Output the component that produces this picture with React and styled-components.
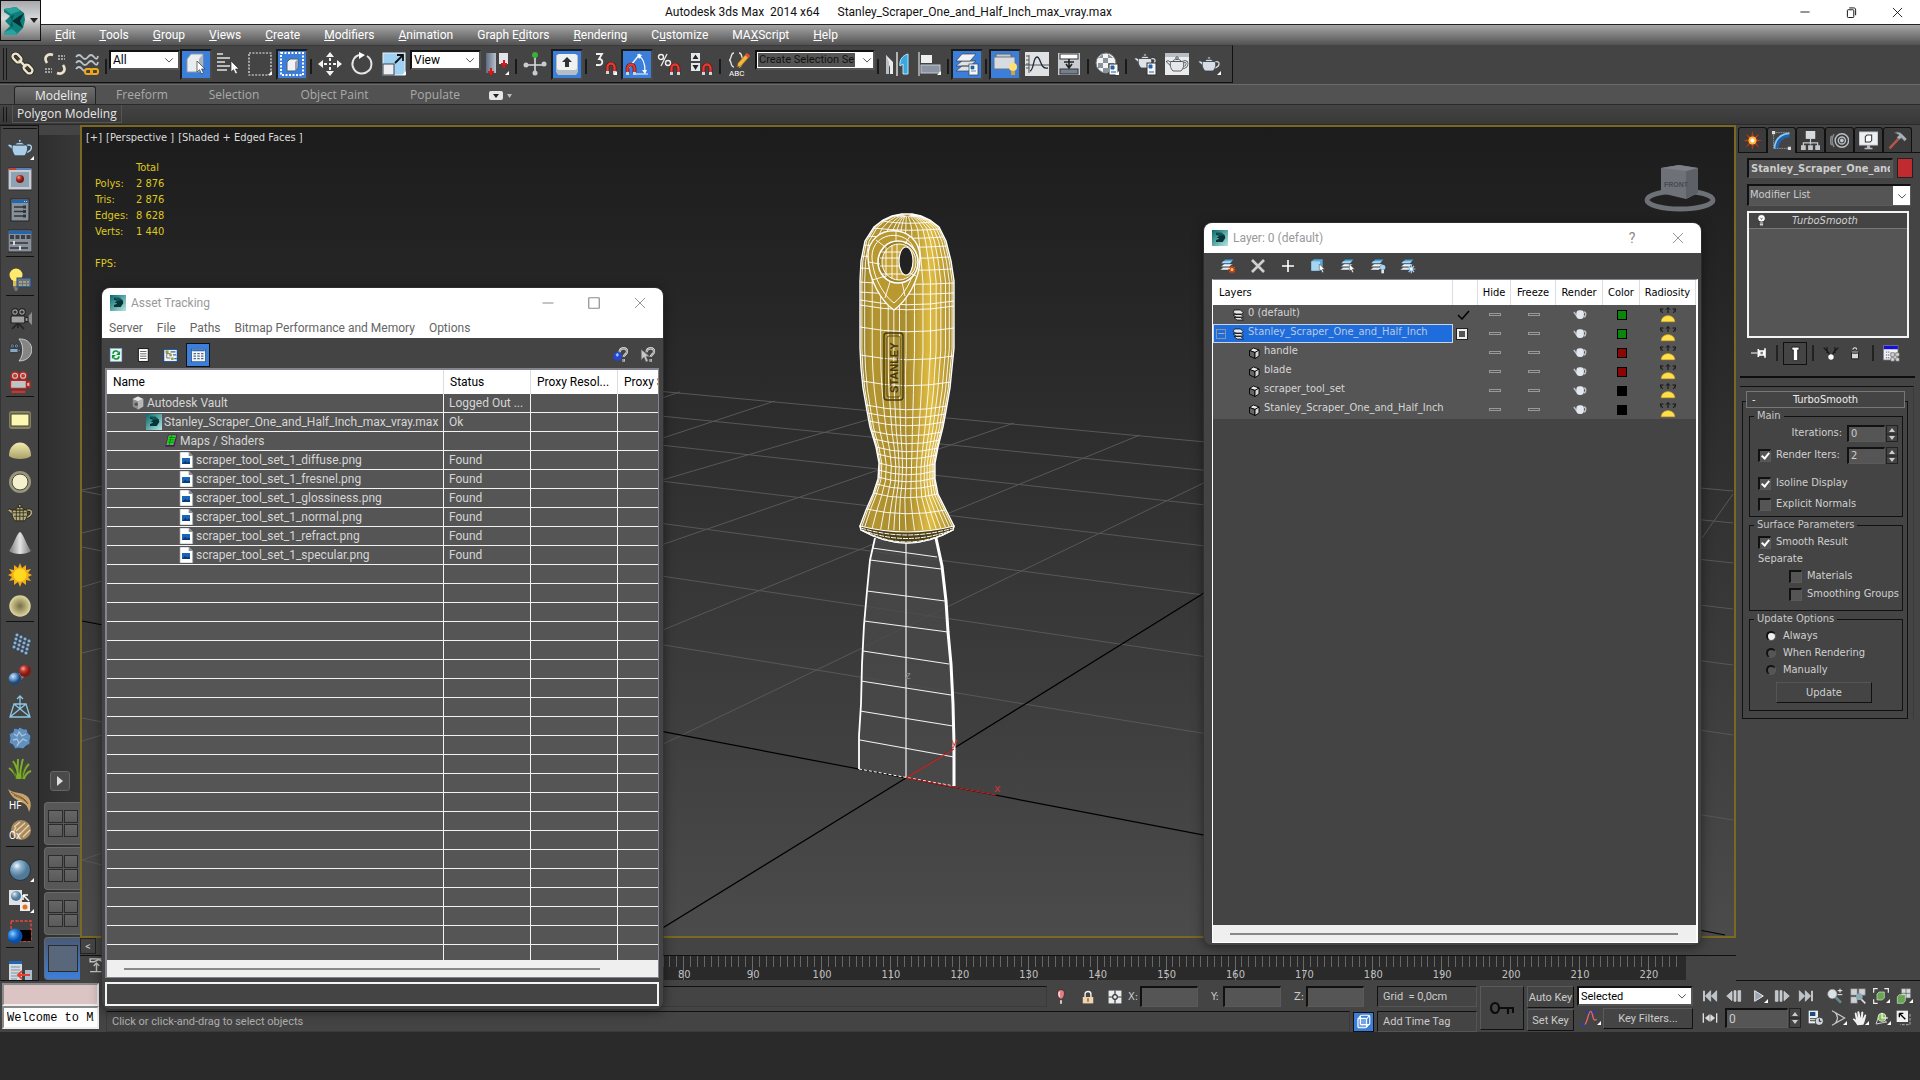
import React from 'react';
import styled, { createGlobalStyle, css } from 'styled-components';

const ui = 'Roboto, "Open Sans", sans-serif';
const openSans = '"Open Sans", "Noto Sans", sans-serif';
const tahoma = '"DejaVu Sans Condensed", "DejaVu Sans", sans-serif';

/* ---------- icons ---------- */

const teapot = (fill, line = '#3a4048') => (
  <g stroke={line} strokeWidth=".8">
    <path d="M18 10c6-2 5 5-.5 6" fill="none" stroke={line} strokeWidth="2.6" />
    <path d="M18 10c6-2 5 5-.5 6" fill="none" stroke={fill} strokeWidth="1.3" />
    <path d="M7 15L1 9.500l2-.8L8 11z" fill={fill} />
    <path d="M6 9.500c-1.500 3-.5 7 2 9.500h8c2.500-2.500 3.500-6.500 2-9.500z" fill={fill} />
    <path d="M8 9.500c0-3 8-3 8 0z" fill={fill} />
    <circle cx="12" cy="6" r="1.300" fill={fill} />
  </g>
);

const magnet = (x, y) => (
  <g transform={`translate(${x} ${y})`}>
    <path d="M1.500 10V5a3.500 3.500 0 0 1 7 0v5" fill="none" stroke="#5c0f0f" strokeWidth="3.600" />
    <path d="M1.500 10V5a3.500 3.500 0 0 1 7 0v5" fill="none" stroke="#e03a33" strokeWidth="2.400" />
    <path d="M0 9h3v3H0zM7 9h3v3H7z" fill="#cfd3da" />
  </g>
);

const cursor = (x, y) => (
  <path transform={`translate(${x} ${y})`} d="M0 0v11l2.500-2.300L4.500 13l2-1-2-4H8z" fill="#fff" stroke="#333" strokeWidth=".7" />
);

const sheets = (
  <g stroke="#2e3740" strokeWidth=".6">
    <path d="M0 18l5-4h13l-5 4z" fill="#e3ebf2" />
    <path d="M1 13l5-4h13l-5 4z" fill="#f2f6fa" />
    <path d="M2 8l6-6h13l-6 6z" fill="#4ba6e2" />
    <path d="M2 8l3-3h13l-3 3z" fill="#a9d7f4" stroke="none" />
  </g>
);

const reel = (fill, line) => (
  <g fill={fill} stroke={line} strokeWidth="1.200">
    <circle cx="7" cy="5" r="3.300" />
    <circle cx="14" cy="5" r="3.300" />
    <rect x="3" y="9" width="14" height="7" rx="1" />
    <path d="M17 11l3-1v5l-3-1z" />
    <circle cx="7" cy="5" r="1" />
    <circle cx="14" cy="5" r="1" />
  </g>
);

const panelBox = (
  <g>
    <rect x="3" y="1" width="18" height="22" fill="#8a9097" stroke="#20242a" />
    <rect x="4" y="2" width="16" height="3" fill="#1f67b5" />
    <path d="M16 3.500h3" stroke="#f4c0b0" strokeDasharray="1 1" />
  </g>
);

const logo = (
  <g>
    <rect width="24" height="24" fill="url(#tealFade)" />
    <path d="M6 4h8l5 4 1 4-4 6H6v-3l5-2-4-2 4-2-5-2z" fill="#063437" />
    <path d="M6 4h8l4 4-7 1z" fill="#0d5659" />
  </g>
);

const icons = {
  logo,
  link: (
    <g>
      <g fill="none" stroke="#222" strokeWidth="4">
        <rect x="-5" y="-3" width="10" height="6" rx="3" transform="translate(6 6) rotate(45)" />
        <rect x="-5" y="-3" width="10" height="6" rx="3" transform="translate(17 17) rotate(45)" />
      </g>
      <g fill="none" stroke="#efe6c9" strokeWidth="2.400">
        <rect x="-5" y="-3" width="10" height="6" rx="3" transform="translate(6 6) rotate(45)" />
        <rect x="-5" y="-3" width="10" height="6" rx="3" transform="translate(17 17) rotate(45)" />
        <path d="M8 8l7 7" />
      </g>
    </g>
  ),
  unlink: (
    <g fill="none" stroke="#ece4c8" strokeWidth="2.600">
      <path d="M4 11C0 5 5 1 10 3" />
      <path d="M20 13c4 6-1 10-6 8" />
      <path d="M15 4h7M15 7h7M2 17h7M2 20h7" stroke="#a2a2a2" strokeWidth="2" strokeDasharray="2 1" />
    </g>
  ),
  bind: (
    <g fill="none">
      <path d="M1 5q3-4 6 0t6 0 6 0 4-1M1 11q3-4 6 0t6 0 6 0 4-1M1 17q3-4 6 0t4 0" stroke="#b9c3cb" strokeWidth="1.800" />
      <rect x="10" y="17" width="7" height="5" rx="2" stroke="#f0a818" strokeWidth="2" />
      <rect x="16" y="17" width="7" height="5" rx="2" stroke="#f0a818" strokeWidth="2" />
    </g>
  ),
  selectObject: (
    <g>
      <path d="M3 7l4-5h12v13l-4 5H3z" fill="#e9edf0" stroke="#8b98a5" />
      <path d="M15 7l4-5v13l-4 5z" fill="#aab4be" />
      {cursor(13, 9)}
    </g>
  ),
  selectName: (
    <g>
      <path d="M1 2h6M1 6h13M1 10h8M1 14h13M1 18h10" stroke="#e2e2e2" strokeWidth="1.500" />
      {cursor(15, 9)}
    </g>
  ),
  region: <rect x="1" y="1" width="22" height="22" fill="none" stroke="#eee" strokeWidth="1.200" strokeDasharray="2 1.400" />,
  crossing: (
    <g>
      <rect x="1" y="1" width="22" height="22" fill="none" stroke="#fff" strokeWidth="2" strokeDasharray="2 1.500" />
      <path d="M7 10l3-3h8v8l-3 4H7z" fill="#f0f2f4" stroke="#53606e" />
      <path d="M15 10l3-3v8l-3 4z" fill="#9aa5b1" />
    </g>
  ),
  move: (
    <g fill="#f2f2f2">
      <path d="M12 0l4 5H8zM12 24l4-5H8zM0 12l5-4v8zM24 12l-5-4v8z" />
      <path d="M11 6h2v3h-2zM11 15h2v3h-2zM6 11h3v2H6zM15 11h3v2h-3zM11 11h2v2h-2z" />
    </g>
  ),
  rotate: (
    <g fill="none" stroke="#e4e6e8" strokeWidth="2">
      <path d="M17 4a9.500 9.500 0 1 1-8-1" />
      <path d="M9 0l6 3-6 4z" fill="#fff" stroke="none" />
    </g>
  ),
  scale: (
    <g>
      <rect x="1" y="1" width="22" height="22" fill="#9fd2f2" stroke="#e6f4fd" />
      <rect x="1" y="12" width="11" height="11" fill="#eceff2" stroke="#3d454f" />
      <path d="M13 11l7-7M15 3h6v6" stroke="#111" strokeWidth="1.800" fill="none" />
    </g>
  ),
  pivot: (
    <g>
      <path d="M1 1h10v20H1z" fill="url(#steel)" />
      <path d="M14 1h9v11h-9z" fill="#e3e5e8" />
      <path d="M6 16v7M3 20h6M19 8v8M16 12h6" stroke="#e01515" strokeWidth="2" />
    </g>
  ),
  manipulate: (
    <g>
      <path d="M12 3v18M3 13h18" stroke="#d8dadc" strokeWidth="1.600" />
      <circle cx="12" cy="3" r="3" fill="#3fae34" />
      <circle cx="3" cy="13" r="2.500" fill="#c7ccd1" />
      <circle cx="21" cy="12" r="2.500" fill="#c7ccd1" />
      <circle cx="12" cy="21" r="2.500" fill="#c7ccd1" />
    </g>
  ),
  keyboard: (
    <g>
      <path d="M1 3h22v17l-2 3H3l-2-3z" fill="#b7bdc4" />
      <rect x="2" y="2" width="20" height="16" rx="2" fill="#eef0f2" />
      <path d="M12 5l5 5h-3v5h-4v-5H7z" fill="#2d3136" />
    </g>
  ),
  snap: (
    <g>
      <path d="M3 2h6l-3 5c5 0 4 7-.5 6H3" fill="none" stroke="#f0f0f0" strokeWidth="1.800" />
      {magnet(13, 10)}
    </g>
  ),
  angle: (
    <g>
      <path d="M2 18L15 2M10 22h13M14 4c5 3 6 8 6 15" fill="none" stroke="#fff" strokeWidth="1.200" />
      <path d="M12 2l5 1-3 4zM17 18h5l-2 4z" fill="#fff" />
      {magnet(1, 11)}
    </g>
  ),
  percent: (
    <g>
      <circle cx="4" cy="5" r="2.500" fill="none" stroke="#eee" strokeWidth="1.400" />
      <circle cx="11" cy="11" r="2.500" fill="none" stroke="#eee" strokeWidth="1.400" />
      <path d="M10 2L4 14" stroke="#eee" strokeWidth="1.300" />
      {magnet(13, 11)}
    </g>
  ),
  spinner: (
    <g>
      <path d="M2 1h9v8H2zM2 11h9v8H2z" fill="#e4e7ea" />
      <path d="M6.500 2.500L9.500 7h-6zM6.500 18l3-5h-6z" fill="#222" />
      {magnet(13, 11)}
    </g>
  ),
  abc: (
    <g>
      <path d="M7 1C3 1 5 8 2 8c3 0 1 7 5 7M12 1c4 0 2 7 5 7-3 0-1 7-5 7" fill="none" stroke="#e8e8e8" strokeWidth="1.300" />
      <path d="M20 1l3 3-9 10-4 1 1-4z" fill="#f4b73a" stroke="#8d5a10" strokeWidth=".7" />
      <path d="M20 1l3 3-2 2-3-3z" fill="#e24b37" />
      <text x="2" y="24" fontSize="8" fontFamily="Roboto" fill="#fff">ABC</text>
    </g>
  ),
  mirror: (
    <g>
      <path d="M1 3l7 7v12l-3 0V13l-4 9z" fill="#e9ebed" />
      <path d="M1 3v19h3V10z" fill="#b9bfc5" />
      <path d="M12 0v24" stroke="#fff" strokeWidth="1.200" />
      <path d="M23 2v20h-5V12l-3 2c-1-6 3-11 8-12z" fill="#39a8e0" stroke="#bfe3f5" />
    </g>
  ),
  align: (
    <g>
      <path d="M2 0v24" stroke="#d8dbde" strokeWidth="1.200" />
      <rect x="4" y="3" width="11" height="8" fill="#eceef0" />
      <rect x="4" y="13" width="19" height="8" fill="#8b95a3" stroke="#c3c9d0" />
    </g>
  ),
  layers: (
    <g stroke="#3a434d" strokeWidth=".7">
      <path d="M1 19l6-5h14l-6 5zM1 14l6-5h14l-6 5z" fill="#dfe3e7" />
      <path d="M1 9l6-7h14l-6 7z" fill="#f2f4f5" />
      <rect x="14" y="12" width="9" height="11" fill="#f4f6f8" />
      <path d="M16 14h3v3h-3zM16 19h5" fill="#2560a8" stroke="#2560a8" />
    </g>
  ),
  ribbon: (
    <g>
      <path d="M3 5V2h15v3" fill="#c5cad0" stroke="#5b6570" />
      <rect x="1" y="5" width="21" height="12" fill="#d8dce0" stroke="#697480" />
      <circle cx="20" cy="15" r="4" fill="#ffe074" />
      <path d="M18 19h4v4h-4z" fill="#d8a038" />
    </g>
  ),
  curve: (
    <g>
      <rect x="0" y="0" width="24" height="24" fill="#dfe1e3" />
      <path d="M4 3v18M1 4h3M1 8h3M1 12h3M1 16h3M0 13h24" stroke="#555" fill="none" />
      <path d="M5 19c4-1 3-14 7-14s3 13 11 11" stroke="#1d2a3a" fill="none" strokeWidth="1.300" />
    </g>
  ),
  schematic: (
    <g>
      <path d="M1 1h22v22H1z" fill="#c9cdd2" />
      <rect x="3" y="2" width="18" height="5" fill="#fff" stroke="#333" />
      <rect x="3" y="17" width="18" height="5" fill="#76808c" stroke="#333" />
      <path d="M12 7v9M9 12l3 4 3-4M7 10h10" fill="none" stroke="#222" strokeWidth="1.600" />
    </g>
  ),
  material: (
    <g>
      <circle cx="11" cy="11" r="10" fill="#f3f3f3" stroke="#777" />
      <path d="M3 6h5V2zM8 6h5v5H8zM13 2v4h5zM3 11h5v5H3zM13 11h6v5h-6zM8 16h5v5H8z" fill="#8a929c" />
      <rect x="14" y="12" width="9" height="11" fill="#f4f6f8" stroke="#333" />
      <path d="M16 14h3v3h-3zM16 20h5" fill="#2560a8" stroke="#2560a8" />
    </g>
  ),
  renderSetup: (
    <g>
      <g transform="translate(0 -3)">{teapot('#dfe3e7')}</g>
      <rect x="14" y="11" width="9" height="12" fill="#f4f6f8" stroke="#333" />
      <path d="M16 13h3v3h-3zM16 20h5" fill="#2560a8" stroke="#2560a8" />
    </g>
  ),
  renderFrame: (
    <g>
      <rect x="0" y="1" width="24" height="22" fill="#e9ebec" />
      <rect x="0" y="1" width="24" height="4" fill="#b9bec4" />
      {teapot('#e5e7ea')}
    </g>
  ),
  render: teapot('#d6dde4'),
  tpBlue: <g transform="translate(-2 -2) scale(1.150)">{teapot('#a9cfe8')}</g>,
  tpWire: (
    <g transform="translate(-2 -2) scale(1.150)">
      {teapot('#b5ac80', '#262416')}
      <path d="M6 12h12M7 15h11M9 8v11M12 7v12M15 8v11" stroke="#3a3722" strokeWidth=".8" />
    </g>
  ),
  frameBall: (
    <g>
      <rect x="0" y="1" width="24" height="22" fill="#c7ccd2" stroke="#2b2f34" />
      <path d="M1 2h7" stroke="#cc3f38" strokeWidth="2" />
      <path d="M8 2h15" stroke="#5b80b4" strokeWidth="2" />
      <rect x="3" y="5" width="18" height="15" fill="#8ea2b3" />
      <circle cx="12" cy="12" r="4" fill="url(#redBall)" />
    </g>
  ),
  listPanel: (
    <g>
      {panelBox}
      <path d="M6 9h11M6 13.500h11M6 18h11" stroke="#30353b" strokeWidth="1.300" />
      <path d="M15 7.500h3v3h-3zM15 12h3v3h-3zM15 16.500h3v3h-3z" fill="#30353b" />
    </g>
  ),
  sliderPanel: (
    <g>
      <rect x="0" y="1" width="24" height="22" fill="#8a9097" stroke="#20242a" />
      <rect x="1" y="2" width="22" height="3" fill="#1f67b5" />
      <path d="M2 6h4v4H2zM7.500 6h4v4h-4zM13 6h4v4h-4zM18.500 6h4v4h-4z" fill="#3a3f45" />
      <path d="M2 14h18M2 19h18" stroke="#30353b" strokeWidth="1.500" />
      <path d="M6 12v4M12 17v4" stroke="#fff" strokeWidth="1.500" />
    </g>
  ),
  bulbPanel: (
    <g>
      <circle cx="8" cy="7" r="6.500" fill="#ffe96c" />
      <path d="M5 13h6v5H5z" fill="#d8c055" />
      <path d="M5 18h6l-2 5H7z" fill="#777" />
      <rect x="9" y="10" width="14" height="9" fill="#6c747d" stroke="#1d4a84" />
      <path d="M11 14h10M11 17h10" stroke="#d6c78d" strokeDasharray="3 1" />
    </g>
  ),
  camera: (
    <g>
      <path d="M18 12l6-7v13z" fill="#8d8d8d" />
      <path d="M10 16l-6 6M10 16l6 6M10 16v5" stroke="#222" strokeWidth="1.600" />
      {reel('#a2a2a2', '#242424')}
    </g>
  ),
  cameraDome: (
    <g>
      <path d="M11 1c17-1 17 22 0 22 5-6 5-16 0-22z" fill="#858585" stroke="#c9c9c9" />
      <g transform="translate(0 5) scale(.6)">{reel('#8aa7c2', '#1c232b')}</g>
    </g>
  ),
  cameraRed: (
    <g transform="translate(-1 1) scale(1.150)">{reel('#b9c7c7', '#c4231c')}<path d="M4 19h12" stroke="#d5302a" strokeWidth="2" /></g>
  ),
  rectLight: <g><rect x="1" y="3" width="22" height="18" rx="3" fill="#858264" /><rect x="3" y="6" width="18" height="12" fill="#fdf8b1" stroke="#403e2a" /></g>,
  dome: <path d="M1 17C1-1 23-1 23 17c-4 4-18 4-22 0z" fill="url(#cream)" />,
  disc: <g><circle cx="12" cy="12" r="11" fill="#98967c" /><circle cx="12" cy="12" r="8" fill="#f5f1cf" stroke="#4a4838" /></g>,
  cone: <path d="M12 0c-3 1-5 10-11 19 5 4 17 4 22 0C17 10 15 1 12 0z" fill="url(#coneFade)" />,
  sun: (
    <g>
      <path d="M12 0l2 5 4-3 0 5 5-1-3 4 4 2-4 2 3 4-5-1 0 5-4-3-2 5-2-5-4 3 0-5-5 1 3-4-4-2 4-2-3-4 5 1 0-5 4 3z" fill="#f2ad1d" />
      <circle cx="12" cy="12" r="6.500" fill="#ffd91f" />
    </g>
  ),
  ambient: <circle cx="12" cy="12" r="10" fill="url(#ambientFade)" stroke="#d8cf98" strokeWidth="1.500" />,
  particles: (
    <g fill="#8fb0cf" stroke="#26384a" strokeWidth=".7">
      {[0, 1, 2, 3].map((r) => [0, 1, 2, 3].map((c) => (
        <circle key={`${r}${c}`} cx={9 + c * 4 - r * 2 + r} cy={2 + r * 4 + c * 2} r="2" />
      )))}
    </g>
  ),
  metaball: (
    <g>
      <path d="M7 11c4 0 6-4 7-7l7 7c-4 0-8 4-9 8z" fill="#8b7f96" />
      <circle cx="17" cy="7" r="6" fill="url(#redBall)" />
      <circle cx="7" cy="15" r="6.500" fill="url(#blueBall)" />
    </g>
  ),
  cage: (
    <g fill="none" stroke="#8cc6e4" strokeWidth="1.300">
      <path d="M2 22L6 9h12l4 13zM6 9l16 13M18 9L2 22M12 14V2M9 4l3-3 3 3" />
    </g>
  ),
  roughBall: (
    <g>
      <path d="M12 1l3 2 4 0 1 4 3 3-1 4 0 4-4 2-3 3-4-1-4 1-2-4-4-2 1-5-1-4 4-2 1-4 4 1z" fill="#6590bb" stroke="#2c4b69" />
      <path d="M6 8l3 2 2-4 3 4 4-2M5 14l4-1 2 4 4-4 4 2M9 20l2-4" stroke="#a3c4e2" fill="none" strokeWidth="1.300" />
    </g>
  ),
  grass: (
    <g fill="none" stroke="#7fae2c" strokeWidth="2">
      <path d="M11 22C10 14 8 8 5 4M12 22c0-8 1-14 3-20M14 22c1-7 4-12 7-15M9 22C7 16 4 13 1 11M16 22c1-4 4-7 7-8M10 22C9 12 10 7 10 2" />
      <path d="M8 22C6 14 4 9 3 7M14 22c0-6 2-11 4-16" stroke="#3c6512" strokeWidth="1" />
    </g>
  ),
  hair: (
    <g>
      <path d="M0 1c5 5 14 2 20 8 4 5 3 11 1 15-1-5-3-8-6-9C8 12 3 9 0 1z" fill="#c9a36c" />
      <path d="M3 4c6 5 12 3 17 12M6 7c5 3 9 3 13 8" stroke="#7a5a30" fill="none" />
      <text x="1" y="21" fontSize="10" fontFamily="Roboto" fill="#fff">HF</text>
    </g>
  ),
  ox: (
    <g>
      <circle cx="13" cy="11" r="10" fill="#a88a62" />
      <path d="M6 8l6-5M8 12l9-8M12 15l9-9M15 18l7-7M5 14l3-6" stroke="#ead2a5" strokeWidth="1.300" />
      <text x="1" y="20" fontSize="10" fontFamily="Roboto" fill="#fff">Ox</text>
    </g>
  ),
  ball: <circle cx="12" cy="12" r="10.500" fill="url(#skyBall)" stroke="#243440" />,
  convert: (
    <g>
      <rect x="1" y="1" width="13" height="15" fill="#dfe3e6" />
      <circle cx="8" cy="7" r="5" fill="url(#skyBall)" />
      <path d="M15 6h5M15 6v5M15 6l6 6" stroke="#fff" strokeWidth="1.500" />
      <rect x="12" y="13" width="10" height="9" fill="#eee" />
      <circle cx="17" cy="18" r="2.500" fill="#e2721f" />
    </g>
  ),
  proxy: (
    <g>
      <rect x="3" y="1" width="20" height="20" fill="none" stroke="#f0453c" strokeWidth="1.400" strokeDasharray="3 1.500" />
      <rect x="12" y="10" width="11" height="11" fill="#000" />
      <circle cx="7" cy="16" r="7.500" fill="url(#brightBall)" />
    </g>
  ),
  docArrow: (
    <g>
      <rect x="1" y="2" width="13" height="22" fill="#d6dade" />
      <rect x="1" y="2" width="13" height="3" fill="#1f67b5" />
      <path d="M3 8h9M3 11h9M3 14h9M3 17h9M3 20h6" stroke="#7893ad" />
      <rect x="17" y="11" width="7" height="11" fill="#a9bdcf" />
      <path d="M22 16H11M14 12l-4 4 4 4" stroke="#e5402e" strokeWidth="1.800" fill="none" />
    </g>
  ),
  refresh: (
    <g>
      <rect x="2" y="1" width="20" height="22" fill="#e8f4ff" stroke="#8fb6dd" />
      <path d="M7 10c0-6 8-6 9-2M17 14c0 6-8 6-9 2" fill="none" stroke="#12962a" strokeWidth="2.800" />
      <path d="M19 5v7h-7zM5 19v-7h7z" fill="#12962a" />
    </g>
  ),
  doc: <g><rect x="4" y="1" width="17" height="22" fill="#fff" stroke="#111" strokeWidth="1.600" /><path d="M7 6h11M7 10h11M7 14h11M7 18h11" stroke="#555" strokeWidth="1.500" /></g>,
  tree: (
    <g>
      <rect x="1" y="2" width="22" height="20" fill="#eef3f8" stroke="#1d4a84" strokeWidth="2" />
      <path d="M6 4v12h6M6 9h6" stroke="#333" fill="none" />
      <path d="M4 4h5v4H4zM10 9h4v4h-4zM13 15h4v4h-4z" fill="#a39a30" />
      <path d="M12 6h8M16 11h5M18 17h4" stroke="#3b6ea8" strokeWidth="2" />
    </g>
  ),
  grid: (
    <g>
      <rect x="1" y="2" width="22" height="20" fill="#f4f6f8" stroke="#1d3f70" />
      <path d="M2 4h20" stroke="#2b68ad" strokeWidth="2" />
      <path d="M4 9h4M10 9h4M16 9h4M4 13h4M10 13h4M16 13h4M4 17h4M10 17h4M16 17h4" stroke="#4f6c92" strokeWidth="2" />
    </g>
  ),
  helpGlobe: (
    <g>
      <circle cx="7" cy="14" r="6.500" fill="#2546cf" />
      <path d="M4 11l3-2 2 3-3 3z" fill="#8fc3ff" />
      <path d="M10 8c0-8 12-8 11-1 0 4-5 4-5 8M16 18v4" fill="none" stroke="#e6e6e6" strokeWidth="3.400" />
      <path d="M10 8c0-8 12-8 11-1 0 4-5 4-5 8M16 18v4" fill="none" stroke="#555" strokeWidth="1" />
    </g>
  ),
  helpCursor: (
    <g>
      <path d="M2 4v15l4-4 3 7 3-1-3-7h5z" fill="#c8c8c8" stroke="#777" />
      <path d="M10 8c0-8 12-8 11-1 0 4-5 4-5 8M16 18v4" fill="none" stroke="#e6e6e6" strokeWidth="3.400" />
      <path d="M10 8c0-8 12-8 11-1 0 4-5 4-5 8M16 18v4" fill="none" stroke="#555" strokeWidth="1" />
    </g>
  ),
  vault: <g><path d="M12 1l9 4v13l-9 5-9-5V5z" fill="#8f8f8f" /><path d="M12 1l9 4-9 4-9-4z" fill="#e3e3e3" /><path d="M12 9l9-4v13l-9 5z" fill="#b8b8b8" /><circle cx="9" cy="14" r="3" fill="#555" /></g>,
  maps: <g><path d="M7 1h16l-5 21H2z" fill="#5a1460" /><path d="M8 2h13l-5 17H4z" fill="#25d425" /><path d="M9 6h10M8 10h10M7 14h10M13 2l-4 17" stroke="#0c7d12" strokeWidth="1.500" /></g>,
  png: <g><path d="M3 0h13l6 6v18H3z" fill="#fff" stroke="#a0a4a8" /><path d="M16 0v6h6z" fill="#8b9096" /><rect x="6" y="9" width="12" height="9" fill="#1865b8" /><path d="M6 18l5-5 3 3 2-2 2 2v2z" fill="#0b3a6e" /></g>,
  newLayer: <g>{sheets}<path d="M18 12v11M12 17.500h11M14 13.500l8 8M22 13.500l-8 8" stroke="#e2481c" strokeWidth="2" /><circle cx="18" cy="17.500" r="2" fill="#ffd24a" /></g>,
  remove: <path d="M3 3l18 18M21 3L3 21" stroke="#cfcfcf" strokeWidth="4" />,
  plus: <path d="M12 3v18M3 12h18" stroke="#fff" strokeWidth="2.400" />,
  selCube: <g><path d="M2 5l4-3h13v13l-4 4H2z" fill="#58a9de" /><path d="M2 5h13v14H2z" fill="#a7d6f2" />{cursor(14, 9)}</g>,
  selLayer: <g>{sheets}{cursor(14, 9)}</g>,
  litLayer: <g>{sheets}<circle cx="19" cy="14" r="4" fill="#a9d4f3" /><path d="M17 18h4v5h-4z" fill="#d7e6f2" /></g>,
  frozenLayer: <g>{sheets}<path d="M17 10v13M11 16.500h12M13 12l8 9M21 12l-8 9" stroke="#9fd0f6" strokeWidth="1.800" /><circle cx="17" cy="16.500" r="2" fill="#fff" /></g>,
  stack: (
    <g stroke="#000" strokeWidth="1.400" fill="#e6e6e6">
      <path d="M4 17h13l6 5H10z" /><path d="M2 12l4-1h12l5 5H9z" /><path d="M2 7l3-5h12l6 6-4 2H8z" />
    </g>
  ),
  cube: <g stroke="#000" strokeWidth="1.800"><path d="M3 7l8-5 11 4-8 5z" fill="#e9e9e9" /><path d="M3 7l11 4v12L3 18z" fill="#666" /><path d="M14 11l8-5v12l-8 5z" fill="#d5d5d5" /></g>,
  star: (
    <g>
      <path d="M12 0l2 8 7-5-5 7 8 2-8 2 5 7-7-5-2 8-2-8-7 5 5-7-8-2 8-2-5-7 7 5z" fill="#b23a16" />
      <circle cx="12" cy="12" r="5" fill="#ffb93c" /><circle cx="12" cy="12" r="2.500" fill="#fff" />
    </g>
  ),
  modify: (
    <g fill="none">
      <path d="M5 22C6 12 12 6 22 5" stroke="#1e63ac" strokeWidth="6" />
      <path d="M3 22C4 10 10 4 22 3" stroke="#8bc9f1" strokeWidth="2" />
      <path d="M2 2v20h20M2 2h20" stroke="#bbb" strokeWidth=".8" strokeDasharray="2 1" />
      <path d="M0 0h4v4H0zM20 20h4v4h-4z" fill="#ddd" />
    </g>
  ),
  hierarchy: <g><path d="M6 0h12v10H6z" fill="#d7dadd" /><path d="M12 10v7M3 19v-4h18v4" stroke="#ccc" fill="none" strokeWidth="1.500" /><path d="M0 18h6v6H0zM9 18h6v6H9zM18 18h6v6h-6z" fill="#c3c7cb" /></g>,
  motion: <g fill="none" stroke="#b9bfc6" strokeWidth="1.800"><circle cx="15" cy="12" r="8.500" /><circle cx="15" cy="12" r="4.500" /><circle cx="15" cy="12" r="1.500" fill="#fff" /><path d="M5 4c-3 5-3 11 0 16M2 6c-2 4-2 8 0 12" stroke="#858a90" /></g>,
  display: <g><rect x="0" y="1" width="24" height="17" fill="#edf0f2" stroke="#8d949b" /><path d="M8 7l2-2h6v7l-2 2H8z" fill="#fff" stroke="#333" strokeWidth="1.300" /><path d="M10 18h4v3h3v2H7v-2h3z" fill="#bbb" /></g>,
  hammer: <g><path d="M2 22L14 9" stroke="#b8564a" strokeWidth="3" /><path d="M8 2c5-2 8 0 11 3l5 5-3 3-4-4-3 2-3-3 3-3z" fill="#aab0b7" stroke="#555" /></g>,
  lightbulb: <g><circle cx="12" cy="8" r="7" fill="#fff" stroke="#000" /><path d="M8 15h8v8H8z" fill="#fff" stroke="#000" /><path d="M8 18h8M8 21h8M10 7l2 3 2-3" stroke="#000" fill="none" /></g>,
  pin: <g><path d="M0 12h10" stroke="#fff" strokeWidth="1.500" /><path d="M11 6v12M13 9h6v6h-6zM21 5v14" stroke="#fff" strokeWidth="2.400" fill="#777" /></g>,
  endResult: <path d="M7 3h10v4h-2v15H9V7H7z" fill="#fff" stroke="#111" />,
  unique: <g><path d="M1 4l7 7 3 6M23 4l-7 7-3 6M6 3v9M18 3v9" stroke="#111" strokeWidth="1.600" fill="none" /><circle cx="12" cy="18" r="4" fill="#fff" /></g>,
  trash: <g><path d="M6 11h12v11H6z" fill="#d6d6d6" stroke="#111" strokeWidth="1.500" /><ellipse cx="12" cy="10" rx="7" ry="3" fill="#777" stroke="#111" /><path d="M8 6c2-4 6-4 7 0" stroke="#eee" fill="none" strokeWidth="2" /></g>,
  config: <g><rect x="1" y="1" width="20" height="20" fill="#f4f4f4" stroke="#999" /><rect x="1" y="1" width="20" height="5" fill="#1212d0" /><path d="M4 10h6M4 14h6M4 18h6" stroke="#88a" strokeWidth="2" strokeDasharray="2 1" /><path d="M11 11h5v5h-5zM18 11h5v5h-5zM11 18h5v5h-5zM18 18h5v5h-5z" fill="#ddd" stroke="#555" /></g>,
  pinRed: <g><path d="M12 1c7 0 6 9 2 14h-4C6 10 5 1 12 1z" fill="#dd8086" stroke="#3a1518" /><path d="M10 4c-2 3-1 6 0 8" stroke="#ffe0e0" fill="none" strokeWidth="2" /><path d="M10 16h4v7h-4z" fill="#ddd" stroke="#222" /></g>,
  lock: <g><path d="M7 12V7c0-6 10-6 10 0v5" fill="none" stroke="#f2f2f2" strokeWidth="2.400" /><path d="M3 12h18v11H3z" fill="#f3d4ac" /><path d="M12 14v6" stroke="#553" strokeWidth="2" /></g>,
  offsetMode: <g><rect x="1" y="1" width="22" height="22" fill="#e9edf0" /><path d="M12 1v7M12 16v7M1 12h7M16 12h7" stroke="#333" strokeWidth="2" /><circle cx="12" cy="12" r="4" fill="none" stroke="#333" strokeWidth="2" /></g>,
  isolate: (
    <g fill="none" stroke="#fff" strokeWidth="1.800">
      <rect x="7" y="2" width="15" height="15" rx="2" />
      <rect x="3" y="7" width="14" height="15" rx="2" fill="#fff" fillOpacity=".3" />
      <path d="M3 8l4-5M17 8l4-5M17 21l4-5" />
    </g>
  ),
  key: <g stroke="#0c0c0c" fill="none" strokeWidth="2.200"><ellipse cx="5" cy="12" rx="4" ry="5" /><path d="M9 12h15M18 12v6M23 12v5" /></g>,
  sCurve: <g><path d="M2 22C8 24 9 2 13 2s2 18 9 12" stroke="#e2666a" strokeWidth="2" fill="none" /><path d="M0 20h4v4H0zM6 1h4v4H6zM16 1h4v4h-4z" fill="#2a38b5" /></g>,
  first: <g fill="#bcc3ca" stroke="#ddd"><path d="M3 4v16" strokeWidth="2.500" /><path d="M13 4v16L5 12zM22 4v16l-8-8z" /></g>,
  prev: <g fill="#bcc3ca" stroke="#ddd"><path d="M9 5v14L1 12z" /><path d="M12 4h3v16h-3zM18 4h4v16h-4z" /></g>,
  play: <path d="M7 4l13 8-13 8z" fill="#9aa8b5" stroke="#e6e6e6" strokeWidth="1.500" />,
  next: <g fill="#bcc3ca" stroke="#ddd"><path d="M15 5v14l8-7z" /><path d="M9 4h3v16H9zM2 4h4v16H2z" /></g>,
  last: <g fill="#bcc3ca" stroke="#ddd"><path d="M21 4v16" strokeWidth="2.500" /><path d="M11 4v16l8-8zM2 4v16l8-8z" /></g>,
  keyMode: <g fill="#ddd" stroke="#ddd"><path d="M2 5v14M22 5v14" strokeWidth="2" /><path d="M11 7v10L5 12zM13 7v10l6-5z" /></g>,
  zoom: <g><circle cx="8" cy="9" r="7" fill="#dbe2e5" stroke="#888" /><path d="M13 14l8 8" stroke="#6a8a92" strokeWidth="4" /><path d="M16 4h7M19.500 1v6M16 10h7" stroke="#fff" strokeWidth="1.400" /></g>,
  zoomAll: <g><path d="M1 1h10v10H1zM13 1h10v10H13zM1 13h10v10H1z" fill="#ccd1d5" stroke="#666" /><circle cx="14" cy="13" r="5" fill="#8faab5" /><path d="M17 17l6 6" stroke="#ddd" strokeWidth="2.500" /></g>,
  extents: <g><path d="M1 7V1h6M17 1h6v6M1 17v6h6" stroke="#eee" fill="none" strokeWidth="1.800" /><path d="M6 9l3-3h8v9l-3 3H6z" fill="#6aa457" stroke="#d3e8c7" /></g>,
  extentsAll: <g><path d="M8 1h14v14H8z" fill="#d6dade" stroke="#666" /><path d="M15 1v14M8 8h14" stroke="#555" /><path d="M2 13l3-3h9v9l-3 4H2z" fill="#6aa457" stroke="#d3e8c7" /></g>,
  timeConfig: <g><rect x="1" y="1" width="14" height="19" fill="#e9eef2" /><rect x="3" y="3" width="8" height="6" fill="#1a4a80" /><path d="M3 13h9M3 16h9" stroke="#666" strokeWidth="2" /><circle cx="17" cy="17" r="6" fill="#cfd6da" stroke="#222" /><path d="M17 13v4h3" stroke="#222" fill="none" strokeWidth="1.500" /></g>,
  fov: <path d="M3 1l19 11L3 23M8 4c4 5 4 11 0 16" fill="none" stroke="#c9c9c9" strokeWidth="1.800" />,
  hand: <path d="M8 23c-3-5-5-7-7-9 1-2 3-1 5 1L4 5c1-2 3-1 3 1l2 6-1-9c1-2 3-1 3 0l2 9 1-9c2-2 3 0 3 1l-1 9 3-6c2-1 3 0 2 2-1 5-2 9-4 13z" fill="#f0f0f0" />,
  orbit: <g><path d="M3 21l4-11 12 8z" fill="none" stroke="#ccc" strokeWidth="1.500" /><circle cx="12" cy="11" r="6" fill="#8fc05f" stroke="#fff" /><path d="M12 4v8h9" stroke="#fff" strokeWidth="1.600" fill="none" /></g>,
  maxVp: <g><path d="M1 1h17v17H1z" fill="#f2f2f2" /><path d="M5 5h6M5 5v6M5 5l9 9" stroke="#000" strokeWidth="2" fill="none" /><path d="M21 6v16H6" stroke="#aaa" strokeWidth="1.500" strokeDasharray="4 2" fill="none" /></g>,
  curveMini: <path d="M3 4h18v4l-6-3-6 3H3zM12 22V11M8 14l4-4 4 4M3 22h18" fill="none" stroke="#c4c4c4" strokeWidth="2" />,
  radio: (
    <g>
      <path d="M2 22c0-12 20-12 20 0z" fill="#ffdf4b" stroke="#e0b020" />
      <path d="M12 9V1M9 4l3-3 3 3M4 9L1 4M0 8V3h5M20 9l3-5M24 8V3h-5" stroke="#111" fill="none" strokeWidth="1.500" />
    </g>
  ),
  close: <path d="M2 2l20 20M22 2L2 22" stroke="currentColor" strokeWidth="1.800" />,
  minimize: <path d="M1 12h22" stroke="currentColor" strokeWidth="2" />,
  maximize: <rect x="3" y="3" width="18" height="18" rx="1" fill="none" stroke="currentColor" strokeWidth="2" />,
  restore: <path d="M3 8c0-2 1-2 2-2h10c2 0 2 1 2 2v13c0 2-1 2-2 2H5c-2 0-2-1-2-2zM7 2h9c4 0 5 1 5 5v11" fill="none" stroke="currentColor" strokeWidth="2" />,
  chevron: <path d="M3 8l9 9 9-9" fill="none" stroke="#555" strokeWidth="2.400" />,
};

const Icon = ({ name, size = 24 }) => (
  <svg width={size} height={size} viewBox="0 0 24 24" aria-hidden="true">{icons[name]}</svg>
);

/* ---------- data ---------- */

const menus = [
  ['', 'E', 'dit'], ['', 'T', 'ools'], ['', 'G', 'roup'], ['', 'V', 'iews'], ['', 'C', 'reate'],
  ['', 'M', 'odifiers'], ['', 'A', 'nimation'], ['Graph E', 'd', 'itors'], ['', 'R', 'endering'],
  ['C', 'u', 'stomize'], ['MA', 'X', 'Script'], ['', 'H', 'elp'],
];

const tools = [
  'link', 'unlink', 'bind', '|', { select: 'All', width: 71 },
  { icon: 'selectObject', on: true }, 'selectName', { icon: 'region', more: true }, { icon: 'crossing', on: true }, '|',
  'move', 'rotate', { icon: 'scale', more: true }, { select: 'View', width: 71 }, { icon: 'pivot', more: true }, '|',
  'manipulate', { icon: 'keyboard', on: true }, '|',
  { icon: 'snap', more: true }, { icon: 'angle', on: true }, 'percent', 'spinner', '|',
  'abc', { select: 'Create Selection Se', width: 120, dim: true }, '|',
  'mirror', { icon: 'align', more: true }, '|', { icon: 'layers', on: true }, '|',
  { icon: 'ribbon', on: true }, 'curve', 'schematic', '|', { icon: 'material', more: true }, '|',
  'renderSetup', 'renderFrame', { icon: 'render', more: true },
];

const sideTools = [
  'tpBlue+', 'frameBall', 'listPanel', 'sliderPanel', '|', 'bulbPanel', '|', 'camera', 'cameraDome', 'cameraRed', '|',
  'rectLight', 'dome', 'disc', 'tpWire', 'cone', 'sun', 'ambient', '|',
  'particles', 'metaball', 'cage', 'roughBall', 'grass', 'hair', 'ox', '|', 'ball+', 'convert+', 'proxy', '|', 'docArrow',
];

const assets = [
  { icon: 'vault', indent: 24, size: 14, name: 'Autodesk Vault', status: 'Logged Out ...' },
  { icon: 'logo', indent: 39, size: 16, name: 'Stanley_Scraper_One_and_Half_Inch_max_vray.max', status: 'Ok' },
  { icon: 'maps', indent: 57, size: 14, name: 'Maps / Shaders', status: '' },
  ...['diffuse', 'fresnel', 'glossiness', 'normal', 'refract', 'specular'].map((map) => ({
    icon: 'png', indent: 71, size: 16, name: `scraper_tool_set_1_${map}.png`, status: 'Found',
  })),
];

const layers = [
  { icon: 'stack', name: '0 (default)', color: '#0a860a', mark: 'check' },
  { icon: 'stack', name: 'Stanley_Scraper_One_and_Half_Inch', color: '#0a860a', mark: 'box', selected: true },
  { icon: 'cube', name: 'handle', color: '#8b0505', child: true },
  { icon: 'cube', name: 'blade', color: '#8b0505', child: true },
  { icon: 'cube', name: 'scraper_tool_set', color: '#000', child: true },
  { icon: 'cube', name: 'Stanley_Scraper_One_and_Half_Inch', color: '#000', child: true },
];

/* ---------- 3d scene ---------- */

// y, left edge, right edge of the handle silhouette
const profile = [
  [214, 902, 912], [216, 892, 921], [220, 883, 930], [227, 874, 939], [241, 865, 946], [261, 861, 951],
  [281, 860, 954], [308, 860, 954], [348, 860, 954], [368, 861, 952], [388, 863, 950], [411, 867, 946],
  [427, 870, 943], [447, 876, 938], [463, 879, 935], [479, 878, 935], [494, 873, 938], [510, 866, 946], [526, 860, 954],
];
const meridians = [0.02, 0.05, 0.13, 0.22, 0.3, 0.36, 0.42, 0.49, 0.58, 0.67, 0.75, 0.81, 0.86, 0.91, 0.95, 0.98];
const rings = [221, 228, 236, 245, 256, 268, 282, 292, 300, 305, 327, 355, 381, 405, 413, 421, 431, 439, 447, 454, 463, 470, 477, 484, 493, 509];

const edgesAt = (y) => {
  const i = Math.max(1, profile.findIndex((p) => p[0] >= y));
  const [y0, l0, r0] = profile[i - 1];
  const [y1, l1, r1] = profile[i];
  const t = (y - y0) / (y1 - y0);
  return [l0 + (l1 - l0) * t, r0 + (r1 - r0) * t];
};

const dip = (y) => (y < 300 ? 4 : 9);
const outline = profile.map(([y, l]) => `${l} ${y}`).join('L')
  + 'L861 530Q907 556 953 530L'
  + profile.map(([y, , r]) => `${r} ${y}`).reverse().join('L');

const meridianPath = (t) => 'M' + profile.map(([y, l, r]) => (
  `${l + (r - l) * t} ${y + dip(y) * 2 * t * (1 - t)}`
)).join('L');

const ringPath = (y) => {
  const [l, r] = edgesAt(y);
  return `M${l} ${y}Q${(l + r) / 2} ${y + dip(y)} ${r} ${y + 1}`;
};

const bladeRows = [[548, 872, 937, 557], [560, 870, 941, 569], [591, 867, 945, 601], [621, 864, 948, 632],
  [651, 863, 949, 664], [681, 861, 951, 695], [711, 860, 953, 726], [740, 860, 954, 757]];

const gridLines = [
  [560, 382, 1733, 491], [560, 406, 1733, 523], [560, 434, 1733, 563], [560, 469, 1733, 609],
  [560, 510, 1733, 665], [560, 561, 1733, 735], [560, 628, 1733, 820],
  [560, 432, 680, 392], [560, 472, 775, 401], [560, 510, 894, 412], [560, 580, 1014, 423],
  [560, 672, 1140, 435], [560, 794, 1276, 448], [1702, 538, 1733, 494],
  [82, 490, 102, 486], [82, 491, 102, 495], [82, 533, 102, 528], [82, 547, 102, 551], [82, 587, 102, 581],
  [82, 653, 102, 648], [82, 718, 102, 722], [82, 741, 102, 735], [82, 860, 102, 853], [82, 860, 102, 865],
];

const Scene = () => (
  <SceneSvg viewBox="82 127 1652 809" preserveAspectRatio="xMidYMin slice">
    <defs>
      <linearGradient id="tealFade" x2="1" y2="1"><stop stopColor="#07686b" /><stop offset="1" stopColor="#b5e6e4" /></linearGradient>
      <linearGradient id="steel"><stop stopColor="#5d6c80" /><stop offset="1" stopColor="#b9c2cc" /></linearGradient>
      <linearGradient id="cream" y2="1" x2="0"><stop stopColor="#f3ecb0" /><stop offset="1" stopColor="#a8a067" /></linearGradient>
      <linearGradient id="coneFade"><stop stopColor="#777" /><stop offset=".5" stopColor="#e4e4e4" /><stop offset="1" stopColor="#777" /></linearGradient>
      <radialGradient id="ambientFade"><stop stopColor="#736e43" /><stop offset="1" stopColor="#d8cf98" /></radialGradient>
      <radialGradient id="redBall" cx=".35" cy=".3"><stop stopColor="#f6a89a" /><stop offset=".5" stopColor="#c23a2e" /><stop offset="1" stopColor="#7d1a14" /></radialGradient>
      <radialGradient id="blueBall" cx=".35" cy=".3"><stop stopColor="#d1e6fa" /><stop offset=".6" stopColor="#5b8fc6" /><stop offset="1" stopColor="#24486f" /></radialGradient>
      <radialGradient id="skyBall" cx=".35" cy=".3"><stop stopColor="#f4fafe" /><stop offset=".4" stopColor="#8fb4cf" /><stop offset="1" stopColor="#507a98" /></radialGradient>
      <radialGradient id="brightBall" cx=".35" cy=".35"><stop stopColor="#9ad0ff" /><stop offset=".5" stopColor="#2a84e2" /><stop offset="1" stopColor="#0a4da5" /></radialGradient>
      <linearGradient id="wood"><stop stopColor="#8f7824" /><stop offset=".12" stopColor="#b39530" /><stop offset=".5" stopColor="#a98c2c" /><stop offset=".75" stopColor="#e0bd43" /><stop offset="1" stopColor="#a88a2c" /></linearGradient>
    </defs>
    <g stroke="#585858" strokeWidth="1">
      {gridLines.map(([x1, y1, x2, y2]) => <line key={`${x1}-${y1}-${y2}`} x1={x1} y1={y1} x2={x2} y2={y2} />)}
    </g>
    <path d="M82 621L906 778L1725 935M648 937L906 778L1204 593" stroke="#000" fill="none" strokeWidth="1.200" />
    <path d="M875 538L870 560L867 591L864 625L862 664L861 704L859 736L859 769L954 786L954 744L953 704L951 664L948 632L946 601L942 566L937 538z" fill="#4a4a4a" fillOpacity=".8" />
    <path d="M875 538L870 560L867 591L864 625L862 664L861 704L859 736L859 769" fill="none" stroke="#fff" strokeWidth="1.800" />
    <path d="M936 538L942 566L946 601L948 632L951 664L953 704L954 744L954 786" fill="none" stroke="#fff" strokeWidth="3" />
    <path d="M859 769L954 786" stroke="#fff" strokeDasharray="3 2" />
    <g stroke="#f2f2f2" strokeWidth="1.200">
      {bladeRows.map(([y, l, r, y2]) => <line key={y} x1={l} y1={y} x2={r} y2={y2} />)}
      <line x1="906" y1="541" x2="906" y2="778" />
    </g>
    <path d={`M${outline}z`} fill="url(#wood)" stroke="#fff" strokeWidth="1.400" />
    <g fill="none" stroke="#fff" strokeWidth=".9">
      {meridians.map((t) => <path key={t} d={meridianPath(t)} />)}
      {rings.map((y) => <path key={y} d={ringPath(y)} />)}
    </g>
    <path d="M860 526Q907 538 954 526L953 530Q907 556 861 530z" fill="#4d3f14" stroke="#fff" strokeWidth="1.200" />
    <path d="M861 528Q907 542 953 528M862 530Q907 547 952 530M866 532Q907 552 948 532" fill="none" stroke="#fff" strokeDasharray="5 1" />
    <path d="M868 256C868 222 920 222 920 258C920 282 905 302 894 310C882 302 868 280 868 256z" fill="#b8982f" stroke="#fff" strokeWidth="1.400" />
    <path d="M872 256C873 228 916 228 916 259C914 280 903 296 894 303C884 296 872 276 872 256z" fill="none" stroke="#fff" />
    <ellipse cx="898" cy="262" rx="20" ry="21" fill="#9b7f26" stroke="#fff" strokeWidth="1.600" />
    <ellipse cx="899" cy="262" rx="17" ry="18" fill="#c4a236" stroke="#fff" />
    <path d="M880 252h22M880 258h22M880 266h22M882 274h22M886 247v30M892 245v34M897 244v36M868 262l12 2M872 280l14-4M885 298l5-16M905 296l-3-14M916 276l-8-4M876 240l8 6M896 231v10M910 236l-5 8" stroke="#fff" strokeWidth=".9" />
    <ellipse cx="906" cy="261" rx="7" ry="14" fill="#222" stroke="#fff" strokeWidth="1.200" />
    <g stroke="#463a12" fill="none">
      <rect x="884" y="333" width="19" height="67" rx="3" strokeWidth="1.400" />
      <rect x="887" y="336" width="13" height="61" rx="2" strokeWidth=".8" />
    </g>
    <text x="898" y="393" transform="rotate(-90 898 393)" fontSize="11" fontWeight="bold" fontFamily="Liberation Sans" fill="#463a12">STANLEY</text>
    <path d="M906 778L954 749M906 778L996 795" stroke="#d02020" strokeWidth="1.200" />
    <g fontSize="11" fontFamily="DejaVu Sans" fill="#d23434">
      <text x="951" y="746">y</text>
      <text x="994" y="792">x</text>
      <text x="905" y="679" fill="#888">z</text>
    </g>
  </SceneSvg>
);

const Cube = () => (
  <ViewCube viewBox="0 0 74 50" aria-label="View cube">
    <ellipse cx="37" cy="37" rx="33" ry="9" fill="none" stroke="#6d7076" strokeWidth="5" />
    <path d="M18 5l18-3 19 3v25l-12 6-25-6z" fill="#6e7177" />
    <path d="M43 8l12-3v25l-12 6z" fill="#5d6066" />
    <path d="M18 5l18-3 19 3-12 3z" fill="#7d8086" />
    <text x="21" y="24" fontSize="7" fontWeight="bold" fontFamily="Liberation Sans" fill="#484a50">FRONT</text>
  </ViewCube>
);

/* ---------- app ---------- */

const Dropdown = ({ label, options, width, dim, height }) => (
  <SelectBox $width={width} $height={height} $dim={dim}>
    <select aria-label={label} defaultValue={dim ? '' : options[0]}>
      {dim && <option value="" />}
      {options.map((o) => <option key={o}>{o}</option>)}
    </select>
    {dim && <Highlight>{options[0]}</Highlight>}
    <Icon name="chevron" size={10} />
  </SelectBox>
);

const Tool = ({ icon, on, more }) => (
  <ToolButton $on={on} $more={more} aria-label={icon}><Icon name={icon} /></ToolButton>
);

const AssetTracking = () => (
  <AssetWindow>
    <WindowTitle>
      <Icon name="logo" size={16} />
      <span>Asset Tracking</span>
      <WindowButtons>
        <button aria-label="Minimize"><Icon name="minimize" size={12} /></button>
        <button aria-label="Maximize"><Icon name="maximize" size={14} /></button>
        <button aria-label="Close"><Icon name="close" size={12} /></button>
      </WindowButtons>
    </WindowTitle>
    <WindowMenu>
      {['Server', 'File', 'Paths', 'Bitmap Performance and Memory', 'Options'].map((m) => <button key={m}>{m}</button>)}
    </WindowMenu>
    <AssetTools>
      <button aria-label="Refresh"><Icon name="refresh" size={14} /></button>
      <button aria-label="Status log"><Icon name="doc" size={14} /></button>
      <button aria-label="Tree view"><Icon name="tree" size={15} /></button>
      <button aria-label="Table view" className="on"><Icon name="grid" size={15} /></button>
      <span />
      <button aria-label="Help"><Icon name="helpGlobe" size={16} /></button>
      <button aria-label="Context help"><Icon name="helpCursor" size={16} /></button>
    </AssetTools>
    <AssetFrame>
      <AssetRows>
        <AssetTable>
          <colgroup><col width="337" /><col width="87" /><col width="87" /><col width="87" /></colgroup>
          <thead>
            <tr><th>Name</th><th>Status</th><th>Proxy Resol...</th><th>Proxy Status</th></tr>
          </thead>
          <tbody>
            {assets.map((a) => (
              <tr key={a.name}>
                <td><AssetName $indent={a.indent}><Icon name={a.icon} size={a.size} />{a.name}</AssetName></td>
                <td>{a.status}</td><td /><td />
              </tr>
            ))}
            {Array.from({ length: 24 }, (_, i) => <tr key={i}><td /><td /><td /><td /></tr>)}
          </tbody>
        </AssetTable>
      </AssetRows>
      <ScrollTrack $right={58}><i /></ScrollTrack>
    </AssetFrame>
    <PathInput aria-label="Path" />
  </AssetWindow>
);

const LayerManager = () => (
  <LayerWindow>
    <WindowTitle>
      <Icon name="logo" size={16} />
      <span>Layer: 0 (default)</span>
      <WindowButtons>
        <button aria-label="Help">?</button>
        <button aria-label="Close"><Icon name="close" size={12} /></button>
      </WindowButtons>
    </WindowTitle>
    <LayerTools>
      {['newLayer', 'remove', 'plus', 'selCube', 'selLayer', 'litLayer', 'frozenLayer'].map((n) => (
        <button key={n} aria-label={n}><Icon name={n} size={16} /></button>
      ))}
    </LayerTools>
    <LayerFrame>
      <LayerTable>
        <colgroup>
          <col /><col width="25" /><col width="33" /><col width="45" /><col width="47" /><col width="37" /><col width="56" />
        </colgroup>
        <thead>
          <tr><th>Layers</th><th /><th>Hide</th><th>Freeze</th><th>Render</th><th>Color</th><th>Radiosity</th></tr>
        </thead>
        <tbody>
          {layers.map((l, i) => (
            <tr key={i}>
              <td>
                <LayerName $child={l.child} $selected={l.selected}>
                  {!l.child && <Expander $show={l.selected}>−</Expander>}
                  <Icon name={l.icon} size={12} />
                  <span>{l.name}</span>
                </LayerName>
              </td>
              <LayerMark>
                {l.mark === 'check' && <svg width="13" height="10" viewBox="0 0 13 10"><path d="M1 5l4 4 7-8" fill="none" stroke="#000" strokeWidth="1.500" /></svg>}
                {l.mark === 'box' && <LayerBox />}
              </LayerMark>
              <td><Dash /></td>
              <td><Dash /></td>
              <td><svg width="15" height="15" viewBox="0 0 24 24"><path d="M3 8l5 7M19 8c4 0 4 7 0 8" stroke="#b9c0c9" strokeWidth="2.400" fill="none" /><rect x="7" y="5" width="12" height="14" rx="5" fill="#e3e8ee" /></svg></td>
              <td><Swatch $color={l.color} /></td>
              <td><Icon name="radio" size={16} /></td>
            </tr>
          ))}
        </tbody>
      </LayerTable>
      <LayerSpace />
      <ScrollTrack $right={18}><i /></ScrollTrack>
    </LayerFrame>
  </LayerWindow>
);

const Check = ({ label, checked, indent }) => (
  <CheckRow $indent={indent}>
    <input type="checkbox" defaultChecked={checked} />
    <span>{label}</span>
  </CheckRow>
);

const Spin = ({ id, label, value }) => (
  <SpinBox>
    <input id={id} aria-label={label} defaultValue={value} />
    <SpinArrows aria-label={`Step ${label}`}>
      <svg width="10" height="16" viewBox="0 0 10 16"><path d="M5 2l3 4H2zM5 14l3-4H2z" fill="#ccc" /><path d="M0 8h10" stroke="#222" /></svg>
    </SpinArrows>
  </SpinBox>
);

const CommandPanel = () => (
  <Panel>
    <PanelTabs>
      {['star', 'modify', 'hierarchy', 'motion', 'display', 'hammer'].map((n) => (
        <PanelTab key={n} $on={n === 'modify'} aria-label={n}><Icon name={n} size={19} /></PanelTab>
      ))}
    </PanelTabs>
    <NameRow>
      <input aria-label="Object name" defaultValue="Stanley_Scraper_One_and_Half_Inch" />
      <button aria-label="Object color" />
    </NameRow>
    <ModifierSelect>
      <select aria-label="Modifier List"><option>Modifier List</option></select>
      <span><Icon name="chevron" size={10} /></span>
    </ModifierSelect>
    <Stack>
      <StackItem><Icon name="lightbulb" size={13} /><em>TurboSmooth</em></StackItem>
    </Stack>
    <StackTools>
      <button aria-label="Pin stack"><Icon name="pin" size={16} /></button>
      <i />
      <button aria-label="Show end result" className="on"><Icon name="endResult" size={17} /></button>
      <i />
      <button aria-label="Make unique"><Icon name="unique" size={16} /></button>
      <button aria-label="Remove modifier"><Icon name="trash" size={14} /></button>
      <i />
      <button aria-label="Configure sets"><Icon name="config" size={17} /></button>
    </StackTools>
    <RolloutArea>
      <RolloutHead><span>-</span>TurboSmooth</RolloutHead>
      <Rollout>
        <Group>
          <legend>Main</legend>
          <FieldRow><label htmlFor="iterations">Iterations:</label><Spin id="iterations" label="Iterations" value="0" /></FieldRow>
          <FieldRow $gap><Check label="Render Iters:" checked /><Spin label="Render Iters" value="2" /></FieldRow>
          <Spacer $h={10} />
          <Check label="Isoline Display" checked />
          <Spacer $h={3} />
          <Check label="Explicit Normals" />
          <Spacer $h={3} />
        </Group>
        <Group>
          <legend>Surface Parameters</legend>
          <Check label="Smooth Result" checked />
          <PlainText>Separate</PlainText>
          <Check label="Materials" indent />
          <Check label="Smoothing Groups" indent />
          <Spacer $h={7} />
        </Group>
        <Group>
          <legend>Update Options</legend>
          {['Always', 'When Rendering', 'Manually'].map((o, i) => (
            <RadioRow key={o}><input type="radio" name="update" defaultChecked={i === 0} /><span>{o}</span></RadioRow>
          ))}
          <UpdateButton>Update</UpdateButton>
        </Group>
      </Rollout>
    </RolloutArea>
  </Panel>
);

const TimeRuler = () => (
  <Ruler>
    {Array.from({ length: 23 }, (_, g) => (
      <Decade key={g} $span={g === 22 ? 5 : 10}>
        <Ticks>{Array.from({ length: g === 22 ? 5 : 10 }, (_, i) => <i key={i} />)}</Ticks>
        <b>{g * 10}</b>
      </Decade>
    ))}
  </Ruler>
);

const StatusBar = () => (
  <Bottom>
    <Listener>
      <input aria-label="Macro recorder" className="pink" />
      <input aria-label="Listener" defaultValue="Welcome to MAXScript." />
    </Listener>
    <StatusLines>
      <StatusRow>
        <StatusField />
        <SmallButton $w={27} aria-label="Pin"><Icon name="pinRed" size={16} /></SmallButton>
        <SmallButton $w={27} aria-label="Selection lock"><Icon name="lock" size={14} /></SmallButton>
        <SmallButton $w={27} aria-label="Offset mode"><Icon name="offsetMode" size={14} /></SmallButton>
        {['X', 'Y', 'Z'].map((axis) => <Coord key={axis}>{axis}:<input /></Coord>)}
        <Box>Grid&nbsp; = 0,0cm</Box>
      </StatusRow>
      <StatusRow>
        <StatusField>Click or click-and-drag to select objects</StatusField>
        <IsolateButton aria-label="Isolate"><Icon name="isolate" size={15} /></IsolateButton>
        <Box as="button">Add Time Tag</Box>
      </StatusRow>
    </StatusLines>
    <KeyButton aria-label="Set keys"><Icon name="key" size={24} /></KeyButton>
    <KeyColumn $w={47}>
      <BevelButton>Auto Key</BevelButton>
      <BevelButton>Set Key</BevelButton>
    </KeyColumn>
    <KeyColumn $w={116}>
      <Dropdown label="Key selection" options={['Selected']} width={116} height={20} />
      <KeyRow>
        <SmallButton $w={26} $more aria-label="Tangents"><Icon name="sCurve" size={16} /></SmallButton>
        <BevelButton>Key Filters...</BevelButton>
      </KeyRow>
    </KeyColumn>
    <Playback>
      <div>
        {['first', 'prev', 'play', 'next', 'last'].map((n) => <SmallButton key={n} $w={24} $more={n === 'play'} aria-label={n}><Icon name={n} size={16} /></SmallButton>)}
        <NavGroup>
          {['zoom', 'zoomAll', 'extents', 'extentsAll'].map((n) => <SmallButton key={n} $w={23} $more={n.startsWith('ext')} aria-label={n}><Icon name={n} size={16} /></SmallButton>)}
        </NavGroup>
      </div>
      <div>
        <SmallButton $w={24} aria-label="Key mode"><Icon name="keyMode" size={16} /></SmallButton>
        <FrameSpin><Spin label="Frame" value="0" /></FrameSpin>
        <NavGroup>
          {['timeConfig', 'fov', 'hand', 'orbit', 'maxVp'].map((n, i) => <SmallButton key={n} $w={22} $more={i > 0 && i < 4} aria-label={n}><Icon name={n} size={16} /></SmallButton>)}
        </NavGroup>
      </div>
    </Playback>
  </Bottom>
);

const App = () => (
  <>
    <GlobalStyle />
    <Page>
      <TitleBar>
        <span>Autodesk 3ds Max&nbsp; 2014 x64</span>
        <span>Stanley_Scraper_One_and_Half_Inch_max_vray.max</span>
        <WindowButtons $dark>
          <button aria-label="Minimize"><Icon name="minimize" size={10} /></button>
          <button aria-label="Restore"><Icon name="restore" size={11} /></button>
          <button aria-label="Close"><Icon name="close" size={11} /></button>
        </WindowButtons>
      </TitleBar>
      <AppButton aria-label="Application menu">
        <svg width="24" height="30" viewBox="0 0 24 30">
          <path d="M1 3L13 1l8 6 1 7-2 8-7 7H2l-1-3 6-6-5-5 5-5-6-4z" fill="#0e7f7b" />
          <path d="M1 3L13 1l4 4-9 3zM2 29l-1-3 8-3 5 4-1 2z" fill="#2aa39e" />
          <path d="M9 15l12-8-4 8 3 7z" fill="#062f31" />
          <path d="M7 10l4-1-2 6zM7 20l3 1-1-6z" fill="#0a5a58" />
        </svg>
        <svg width="8" height="5" viewBox="0 0 8 5"><path d="M0 0h8L4 5z" fill="#222" /></svg>
      </AppButton>
      <MenuBar>
        {menus.map(([a, b, c]) => <button key={a + b + c}>{a}<u>{b}</u>{c}</button>)}
      </MenuBar>
      <ToolArea>
        <Toolbar>
          <Grip />
          {tools.map((t, i) => {
            if (t === '|') return <Divider key={i} />;
            if (t.select) return <Dropdown key={i} label={t.select} options={[t.select]} width={t.width} dim={t.dim} height={20} />;
            return typeof t === 'string' ? <Tool key={i} icon={t} /> : <Tool key={i} {...t} />;
          })}
        </Toolbar>
      </ToolArea>
      <Ribbon>
        <RibbonTab $on $w={82}>Modeling</RibbonTab>
        <RibbonTab $w={92}>Freeform</RibbonTab>
        <RibbonTab $w={92}>Selection</RibbonTab>
        <RibbonTab $w={109}>Object Paint</RibbonTab>
        <RibbonTab $w={92}>Populate</RibbonTab>
        <RibbonMore aria-label="Ribbon options">
          <svg width="23" height="9" viewBox="0 0 23 9"><rect width="14" height="9" rx="2" fill="#e6e6e6" /><path d="M4 3h6l-3 4z" fill="#222" /><path d="M18 3h5l-2.500 4z" fill="#bbb" /></svg>
        </RibbonMore>
      </Ribbon>
      <SubRibbon><Grip /><button>Polygon Modeling</button></SubRibbon>
      <Workspace>
        <SideBar>
          {sideTools.map((n, i) => (n === '|' ? <SideRule key={i} /> : (
            <SideButton key={i} $more={n.endsWith('+')} aria-label={n}><Icon name={n.replace('+', '')} /></SideButton>
          )))}
        </SideBar>
        <LayoutTabs>
          <PlayTab aria-label="Layout presets"><svg width="6" height="10" viewBox="0 0 6 10"><path d="M0 0l6 5-6 5z" fill="#ddd" /></svg></PlayTab>
          {[0, 1, 2].map((n) => <LayoutTab key={n} aria-label={`Layout ${n + 1}`}><i /><i /><i /><i /></LayoutTab>)}
          <LayoutTab $on aria-label="Layout 4"><i /></LayoutTab>
        </LayoutTabs>
        <Center>
          <Viewport>
            <Scene />
            <ViewLabel>
              <span>[+]</span><span>[Perspective ]</span><span>[Shaded + Edged Faces ]</span>
            </ViewLabel>
            <Stats>
              <span /><span>Total</span>
              <span>Polys:</span><span>2 876</span>
              <span>Tris:</span><span>2 876</span>
              <span>Edges:</span><span>8 628</span>
              <span>Verts:</span><span>1 440</span>
              <span /><span />
              <span>FPS:</span><span />
            </Stats>
            <Cube />
          </Viewport>
          <SliderRow><button aria-label="Previous">&lt;</button></SliderRow>
          <TrackRow><Icon name="curveMini" size={17} /><TimeRuler /></TrackRow>
        </Center>
        <CommandPanel />
      </Workspace>
      <StatusBar />
      <AssetTracking />
      <LayerManager />
    </Page>
  </>
);

export default App;

/* ---------- styles ---------- */

const GlobalStyle = createGlobalStyle`
  * { box-sizing: border-box; }
  body { margin: 0; background: #2a2a2a; font-family: ${ui}; font-size: 12px; }
  button, input, select { font: inherit; color: inherit; }
  button { background: none; border: 0; padding: 0; }
  svg { flex: none; display: block; }
`;

const sunken = css`
  border: 1px solid #2f2f2f;
  border-top: 2px solid #111;
  border-left: 2px solid #111;
  border-right-color: #5a5a5a;
  border-bottom-color: #5a5a5a;
  background: #555;
  color: #ccc;
`;

const corner = css`
  position: relative;
  &::after {
    content: '';
    position: absolute;
    right: 2px;
    bottom: 3px;
    border-style: solid;
    border-width: 0 0 4px 4px;
    border-color: transparent transparent #fff transparent;
  }
`;

const Page = styled.div`
  position: relative;
  display: flex;
  flex-direction: column;
  min-height: 100vh;
  padding-bottom: 48px;
  background: #2a2a2a;
  overflow: hidden;
`;

const TitleBar = styled.header`
  position: relative;
  display: flex;
  justify-content: center;
  align-items: center;
  gap: 18px;
  height: 25px;
  padding-right: 143px;
  background: #fff;
  border-bottom: 1px solid #222;
  color: #111;
  white-space: nowrap;
`;

const WindowButtons = styled.div`
  position: absolute;
  right: 0;
  top: 0;
  display: flex;
  color: ${(p) => (p.$dark ? '#000' : '#8a8a8a')};
  button {
    width: 46px;
    height: ${(p) => (p.$dark ? '24px' : '30px')};
    display: flex;
    align-items: center;
    justify-content: center;
    font-size: 14px;
  }
`;

const AppButton = styled.button`
  position: absolute;
  left: 0;
  top: 0;
  z-index: 2;
  width: 41px;
  height: 41px;
  display: flex;
  align-items: center;
  justify-content: center;
  gap: 3px;
  border: 1px solid #111;
  background: linear-gradient(#a6a8ac, #d8d8d8 45%, #747474);
`;

const MenuBar = styled.nav`
  display: flex;
  gap: 24px;
  height: 20px;
  padding-left: 55px;
  background: linear-gradient(#a6a6a6, #525252);
  color: #fff;
  button { line-height: 20px; white-space: nowrap; }
`;

const ToolArea = styled.div`
  background: #444;
  border-bottom: 1px solid #444;
`;

const Toolbar = styled.div`
  display: flex;
  align-items: center;
  width: 1233px;
  height: 38px;
  border: 1px solid #111;
  border-left: 0;
  border-top-color: #3a3a3a;
`;

const Grip = styled.i`
  align-self: stretch;
  width: 4px;
  margin: 2px 0 2px 3px;
  border: solid #161616;
  border-width: 0 1px;
  flex: none;
`;

const Divider = styled.i`
  width: 2px;
  height: 15px;
  margin: 4px 2px 0;
  background: #1a1a1a;
`;

const ToolButton = styled.button`
  ${(p) => p.$more && corner}
  width: 32px;
  height: 31px;
  display: flex;
  align-items: center;
  justify-content: center;
  border: 2px solid transparent;
  ${(p) => p.$on && 'background: #3b7fdb; border-color: #1b1b1b #4a4a4a #4a4a4a #1b1b1b;'}
`;

const SelectBox = styled.span`
  position: relative;
  display: flex;
  align-items: center;
  align-self: flex-start;
  width: ${(p) => p.$width}px;
  height: ${(p) => p.$height}px;
  margin-top: 4px;
  flex: none;
  select {
    appearance: none;
    width: 100%;
    height: 100%;
    padding: 0 0 0 2px;
    background: #fff;
    border: 2px solid #111;
    border-right-color: #555;
    border-bottom-color: #555;
    color: #000;
  }
  svg { position: absolute; right: ${(p) => (p.$dim ? '3px' : '6px')}; pointer-events: none; }
`;

const Highlight = styled.span`
  position: absolute;
  left: 3px;
  top: 3px;
  padding: 0 1px;
  background: #555;
  color: #111;
  font-size: 11px;
  line-height: 14px;
  white-space: nowrap;
  pointer-events: none;
`;

const Ribbon = styled.div`
  display: flex;
  align-items: flex-end;
  height: 21px;
  padding-left: 14px;
  background: #525252;
  border-top: 1px solid #6a6a6a;
  border-bottom: 1px solid #2a2a2a;
  font-family: ${openSans};
`;

const RibbonTab = styled.button`
  width: ${(p) => p.$w}px;
  height: 18px;
  line-height: 16px;
  padding-left: ${(p) => (p.$on ? '12px' : '0')};
  color: ${(p) => (p.$on ? '#eee' : '#aaa')};
  ${(p) => p.$on && 'background: linear-gradient(#6e6e6e, #505050); border: 1px solid #222; border-bottom: 0; border-radius: 3px 3px 0 0;'}
`;

const RibbonMore = styled.button`
  height: 18px;
  margin-left: 8px;
  display: flex;
  align-items: center;
`;

const SubRibbon = styled.div`
  display: flex;
  height: 20px;
  background: linear-gradient(#444, #383838);
  border-bottom: 1px solid #2a2a2a;
  font-family: ${openSans};
  button {
    height: 18px;
    margin-left: 5px;
    padding: 0 4px;
    border: 1px solid #555;
    border-top: 0;
    line-height: 17px;
    color: #e6e6e6;
  }
`;

const Workspace = styled.main`
  flex: 1;
  display: flex;
  background: #444;
`;

const SideBar = styled.aside`
  width: 39px;
  height: 856px;
  overflow: hidden;
  border: 1px solid #111;
  border-left-color: #333;
  padding: 2px 0 0;
  background: #444;
  display: flex;
  flex-direction: column;
  align-items: center;
  &::before {
    content: '';
    width: 34px;
    border-top: 1px solid #111;
    margin-bottom: 3px;
  }
`;

const SideButton = styled.button`
  ${(p) => p.$more && corner}
  width: 32px;
  height: 31px;
  flex: none;
  display: flex;
  align-items: center;
  justify-content: center;
`;

const SideRule = styled.i`
  width: 28px;
  height: 8px;
  flex: none;
  border-top: 1px solid #111;
`;

const LayoutTabs = styled.aside`
  width: 41px;
  display: flex;
  flex-direction: column;
  justify-content: flex-end;
  align-items: flex-end;
  gap: 2px;
  padding-bottom: 1px;
  background: linear-gradient(90deg, #2e2e2e, #383838);
  border-top: 10px solid #444;
`;

const PlayTab = styled.button`
  width: 20px;
  height: 20px;
  margin: 0 10px 9px 0;
  display: flex;
  align-items: center;
  justify-content: center;
  border: 1px solid #666;
  border-radius: 3px;
  background: #4a4a4a;
`;

const LayoutTab = styled.button`
  width: 36px;
  height: 43px;
  padding: 7px 2px 7px 3px;
  display: grid;
  grid-template-columns: ${(p) => (p.$on ? '1fr' : '1fr 1fr')};
  gap: 1px;
  border: 1px solid #6a6a6a;
  border-right: 0;
  border-radius: 4px 0 0 4px;
  background: ${(p) => (p.$on ? 'linear-gradient(#4a5a74, #3b7fdb)' : '#575757')};
  i { border: 1px solid #2b2b2b; background: linear-gradient(#666, #5a5a5a); ${(p) => p.$on && 'background: #59677c;'} }
`;

const Center = styled.section`
  flex: 1;
  min-width: 0;
  display: flex;
  flex-direction: column;
`;

const Viewport = styled.div`
  position: relative;
  flex: 1;
  border: 2px solid #7b6822;
  background: linear-gradient(#1c1c1c, #4b4b4b);
  overflow: hidden;
`;

const SceneSvg = styled.svg`
  position: absolute;
  inset: 0;
  width: 100%;
  height: 100%;
`;

const ViewLabel = styled.div`
  position: relative;
  display: flex;
  gap: 4px;
  padding: 3px 0 0 4px;
  font: 11px/16px ${tahoma};
  color: #dcdcdc;
`;

const Stats = styled.div`
  position: relative;
  display: grid;
  grid-template-columns: 41px 60px;
  grid-auto-rows: 16px;
  padding: 14px 0 0 13px;
  font: 11px/16px ${tahoma};
  color: #dfc81c;
`;

const ViewCube = styled.svg`
  position: absolute;
  top: 36px;
  right: 17px;
  width: 74px;
  height: 50px;
`;

const SliderRow = styled.div`
  height: 18px;
  border-bottom: 1px solid #111;
  button {
    width: 16px;
    height: 16px;
    border: 1px solid #222;
    color: #bbb;
    font-size: 11px;
    line-height: 13px;
  }
`;

const TrackRow = styled.div`
  display: flex;
  height: 25px;
  padding-left: 8px;
`;

const Ruler = styled.div`
  flex: 1;
  display: flex;
  margin: 0 50px 0 24px;
  padding: 0 3px;
  background: #2a2a2a;
  border-bottom: 1px solid #444;
`;

const Decade = styled.div`
  flex: ${(p) => p.$span} 1 0;
  min-width: 0;
  border-left: 1px solid #6a6a6a;
  b {
    display: block;
    width: 40px;
    margin: 1px 0 0 -20px;
    text-align: center;
    font: 11px/13px ${tahoma};
    color: #c0c0c0;
  }
`;

const Ticks = styled.div`
  display: flex;
  height: 11px;
  i { flex: 1; border-right: 1px solid #666; }
  i:last-child { border: 0; }
`;

/* floating windows */

const floating = css`
  position: absolute;
  display: flex;
  flex-direction: column;
  border-radius: 8px;
  background: #444;
  overflow: hidden;
  box-shadow: 0 2px 12px rgba(0, 0, 0, .5), 0 0 0 1px rgba(70, 70, 70, .6);
`;

const AssetWindow = styled.section`
  ${floating}
  left: 102px;
  top: 288px;
  width: 561px;
  height: 721px;
`;

const LayerWindow = styled.section`
  ${floating}
  right: 219px;
  top: 223px;
  width: 497px;
  height: 722px;
`;

const WindowTitle = styled.div`
  position: relative;
  flex: none;
  display: flex;
  align-items: center;
  gap: 5px;
  height: 30px;
  padding-left: 8px;
  background: #fff;
  color: #999;
`;

const WindowMenu = styled.div`
  flex: none;
  display: flex;
  gap: 14px;
  height: 20px;
  padding-left: 7px;
  background: #fff;
  color: #666;
  button { line-height: 18px; }
`;

const AssetTools = styled.div`
  flex: none;
  display: flex;
  align-items: center;
  height: 30px;
  padding: 4px 2px 0 1px;
  gap: 1px;
  span { flex: 1; }
  button {
    width: 26px;
    height: 24px;
    display: flex;
    align-items: center;
    justify-content: center;
  }
  .on { width: 24px; margin-left: 2px; background: #3b7fdb; border: 1px solid #111; }
`;

const AssetFrame = styled.div`
  flex: 1;
  min-height: 0;
  display: flex;
  flex-direction: column;
  margin: 0 4px 4px 3px;
  border: 1px solid #85858f;
  border-width: 2px 1px 1px 2px;
`;

const AssetRows = styled.div`
  flex: 1;
  min-height: 0;
  overflow: hidden;
`;

const AssetTable = styled.table`
  table-layout: fixed;
  width: 598px;
  border-spacing: 0;
  color: #d6d6d6;
  background: #555;
  white-space: nowrap;
  th {
    height: 24px;
    padding: 0 6px;
    text-align: left;
    font-weight: 400;
    background: #fff;
    color: #000;
    border-right: 1px solid #ddd;
  }
  td {
    height: 19px;
    padding: 0 5px;
    line-height: 16px;
    border: solid #f2f2f2;
    border-width: 0 1px 1px 0;
    overflow: hidden;
  }
  td:first-child { padding-left: 0; padding-right: 0; }
`;

const AssetName = styled.span`
  display: flex;
  align-items: center;
  gap: 2px;
  height: 18px;
  padding-left: ${(p) => p.$indent}px;
`;

const ScrollTrack = styled.div`
  flex: none;
  height: 17px;
  padding: 8px ${(p) => p.$right}px 0 17px;
  background: #efefef;
  i { display: block; height: 2px; background: #888; }
`;

const PathInput = styled.input`
  flex: none;
  height: 24px;
  margin: 0 4px 3px 3px;
  border: 2px solid #f4f4f4;
  background: #444;
`;

const LayerTools = styled.div`
  flex: none;
  display: flex;
  height: 26px;
  padding-left: 9px;
  button { width: 30px; display: flex; align-items: center; justify-content: center; }
`;

const LayerFrame = styled.div`
  flex: 1;
  min-height: 0;
  display: flex;
  flex-direction: column;
  margin: 0 3px 2px 8px;
  border: 1px solid #fff;
  border-right-width: 2px;
  border-top-color: #85858f;
`;

const LayerTable = styled.table`
  table-layout: fixed;
  width: 100%;
  border-spacing: 0;
  background: #555;
  font: 11px/16px ${tahoma};
  color: #d6d6d6;
  th {
    height: 25px;
    padding: 0;
    font-weight: 400;
    background: #fff;
    color: #000;
    border-right: 1px solid #ddd;
  }
  th:first-child { text-align: left; padding-left: 6px; }
  td { height: 19px; padding: 0; }
  td > * { margin: 0 auto; }
`;

const LayerMark = styled.td`
  > svg, > div { margin: 0 0 0 4px; }
`;

const LayerName = styled.div`
  display: flex;
  align-items: center;
  height: 19px;
  gap: 4px;
  padding-left: ${(p) => (p.$child ? '34px' : '2px')};
  border: 1px solid transparent;
  white-space: nowrap;
  span { margin-top: -4px; }
  ${(p) => p.$selected && 'background: #1f6cdc; border-color: #c8d4e4; color: #b9c9e2;'}
`;

const Expander = styled.i`
  width: 10px;
  height: 10px;
  margin-right: 2px;
  border: 1px solid #8a93a0;
  line-height: 8px;
  font-style: normal;
  text-align: center;
  color: #aaa;
  visibility: ${(p) => (p.$show ? 'visible' : 'hidden')};
`;

const LayerBox = styled.div`
  width: 10px;
  height: 10px;
  border: 2px solid #eee;
  outline: 1px solid #222;
`;

const Dash = styled.div`
  width: 12px;
  height: 3px;
  border: 1px solid #999;
`;

const Swatch = styled.div`
  width: 10px;
  height: 10px;
  border: 1px solid #000;
  background: ${(p) => p.$color};
`;

const LayerSpace = styled.div`
  flex: 1;
  background: #444;
`;

/* command panel */

const Panel = styled.aside`
  width: 184px;
  padding-left: 2px;
  font: 11px/14px ${tahoma};
  color: #d0d0d0;
  border-bottom: 1px solid #111;
`;

const PanelTabs = styled.div`
  display: flex;
  height: 28px;
  padding-top: 2px;
  border-bottom: 1px solid #111;
`;

const PanelTab = styled.button`
  width: 29px;
  height: ${(p) => (p.$on ? '26px' : '25px')};
  display: flex;
  align-items: center;
  justify-content: center;
  border: 1px solid #111;
  border-bottom: 0;
  border-radius: 3px 3px 0 0;
  background: ${(p) => (p.$on ? '#444' : '#3b3b3b')};
`;

const NameRow = styled.div`
  display: flex;
  gap: 4px;
  margin: 5px 7px 6px 9px;
  input { ${sunken} flex: 1; min-width: 0; height: 20px; font-weight: bold; padding: 0 2px; }
  button { width: 16px; height: 20px; background: #bf2b2e; border: 1px solid #222; }
`;

const ModifierSelect = styled.div`
  display: flex;
  height: 22px;
  margin: 0 9px 5px;
  ${sunken}
  select { flex: 1; appearance: none; border: 0; background: none; padding: 0 0 2px 1px; }
  span { width: 17px; display: flex; align-items: center; justify-content: center; background: #fff; }
`;

const Stack = styled.div`
  height: 127px;
  margin: 0 11px 0 9px;
  border: 2px solid #f4f4f4;
  background: #555;
`;

const StackItem = styled.div`
  display: flex;
  align-items: center;
  height: 16px;
  padding-left: 6px;
  gap: 24px;
  background: #444;
  border-bottom: 1px solid #777;
`;

const StackTools = styled.div`
  display: flex;
  align-items: center;
  height: 40px;
  padding: 0 0 8px 7px;
  border-bottom: 2px solid #0d0d0d;
  margin: 0 5px 0 2px;
  button { width: 24px; height: 23px; display: flex; align-items: center; justify-content: center; }
  .on { border: 1px solid #111; }
  i { width: 2px; height: 16px; margin: 0 5px; background: #222; }
`;

const RolloutArea = styled.div`
  margin: 8px 6px 0 2px;
  padding: 4px 5px 0 2px;
  border-top: 1px solid #111;
  border-right: 1px solid #3a3a3a;
`;

const RolloutHead = styled.button`
  position: relative;
  display: block;
  width: 159px;
  height: 17px;
  margin: 0 0 0 4px;
  background: #444;
  border: 1px solid #777;
  color: #eee;
  span { position: absolute; left: 5px; }
`;

const Rollout = styled.div`
  margin-top: -7px;
  padding: 7px 4px 6px 6px;
  border: 1px solid #111;
`;

const Group = styled.fieldset`
  min-width: 0;
  margin: 0 0 1px;
  padding: 1px 4px 0 8px;
  border: 1px solid #111;
  legend { padding: 0 3px; margin-left: -4px; line-height: 14px; color: #c8c8c8; }
`;

const FieldRow = styled.div`
  display: flex;
  justify-content: flex-end;
  align-items: center;
  gap: 5px;
  height: 18px;
  white-space: nowrap;
  ${(p) => p.$gap && 'margin-top: 4px; justify-content: space-between;'}
`;

const CheckRow = styled.label`
  display: flex;
  align-items: center;
  gap: 5px;
  height: 18px;
  margin-left: ${(p) => (p.$indent ? '31px' : '0')};
  white-space: nowrap;
  input { ${sunken} position: relative; appearance: none; width: 13px; height: 13px; margin: 0; flex: none; }
  input:checked::after {
    content: '';
    position: absolute;
    left: 3px;
    top: 0;
    width: 3px;
    height: 6px;
    border: solid #fff;
    border-width: 0 2px 2px 0;
    transform: rotate(40deg);
  }
`;

const PlainText = styled.div`
  line-height: 16px;
`;

const RadioRow = styled.label`
  display: flex;
  align-items: center;
  gap: 7px;
  height: 17px;
  padding-left: 8px;
  input { ${sunken} appearance: none; width: 10px; height: 10px; margin: 0; border-radius: 50%; }
  input:checked { background: #eee; }
`;

const UpdateButton = styled.button`
  display: block;
  width: 96px;
  height: 21px;
  margin: 4px 0 7px 18px;
  border: 1px solid #111;
  border-top-color: #555;
  border-left-color: #555;
`;

const Spacer = styled.div`
  height: ${(p) => p.$h}px;
`;

const SpinBox = styled.span`
  display: flex;
  gap: 1px;
  input { ${sunken} width: 38px; height: 17px; padding: 0 2px; }
`;

const SpinArrows = styled.button`
  border: 1px solid #222;
  height: 17px;
`;

/* bottom bar */

const Bottom = styled.footer`
  display: flex;
  gap: 3px;
  height: 51px;
  background: #444;
  color: #ccc;
`;

const Listener = styled.div`
  width: 97px;
  margin: 2px 4px 0 2px;
  display: flex;
  flex-direction: column;
  input {
    width: 97px;
    height: 23px;
    padding: 0 3px;
    border: 2px solid #8a8a8a;
    border-right-color: #eee;
    border-bottom-color: #eee;
    background: #fff;
    color: #000;
    font: 12px "Liberation Mono", monospace;
  }
  .pink { background: #dcc3c4; }
`;

const StatusLines = styled.div`
  flex: 1;
  min-width: 0;
  display: flex;
  flex-direction: column;
  gap: 4px;
  padding-top: 5px;
  font-size: 11px;
`;

const StatusRow = styled.div`
  display: flex;
  align-items: center;
  height: 21px;
`;

const StatusField = styled.div`
  flex: 1;
  height: 21px;
  padding-left: 5px;
  line-height: 20px;
  border: 1px solid #3a3a3a;
  border-top-color: #111;
  color: #b0b0b0;
`;

const SmallButton = styled.button`
  ${(p) => p.$more && corner}
  width: ${(p) => p.$w}px;
  height: 20px;
  flex: none;
  display: flex;
  align-items: center;
  justify-content: center;
`;

const Coord = styled.label`
  display: flex;
  align-items: center;
  justify-content: space-between;
  width: 70px;
  margin-right: 13px;
  font: 11px ${tahoma};
  input { ${sunken} width: 58px; height: 21px; }
`;

const Box = styled.div`
  width: 100px;
  height: 21px;
  padding-left: 5px;
  border: 1px solid #111;
  border-right-color: #555;
  border-bottom-color: #555;
  line-height: 19px;
  text-align: left;
`;

const IsolateButton = styled.button`
  width: 21px;
  height: 20px;
  margin: 0 3px;
  display: flex;
  align-items: center;
  justify-content: center;
  background: #3b7fdb;
  border: 1px solid #111;
`;

const KeyButton = styled.button`
  width: 44px;
  height: 44px;
  margin-top: 5px;
  display: flex;
  align-items: center;
  justify-content: center;
  border: 1px solid #111;
  border-top-color: #5a5a5a;
  border-left-color: #5a5a5a;
`;

const KeyColumn = styled.div`
  width: ${(p) => p.$w}px;
  padding-top: 5px;
  display: flex;
  flex-direction: column;
  gap: 1px;
  font-size: 11px;
  > span { margin: 0; }
`;

const BevelButton = styled.button`
  flex: 1;
  max-height: 22px;
  min-height: 21px;
  white-space: nowrap;
  border: 1px solid #111;
  border-top-color: #5a5a5a;
  border-left-color: #5a5a5a;
`;

const KeyRow = styled.div`
  display: flex;
  margin-top: 1px;
`;

const Playback = styled.div`
  width: 224px;
  padding: 5px 0 0 2px;
  > div { display: flex; height: 22px; }
`;

const NavGroup = styled.div`
  display: flex;
  margin-left: auto;
  padding-right: 5px;
`;

const FrameSpin = styled.div`
  margin-left: 3px;
  input { width: 63px; height: 20px; }
  button { height: 20px; }
`;
